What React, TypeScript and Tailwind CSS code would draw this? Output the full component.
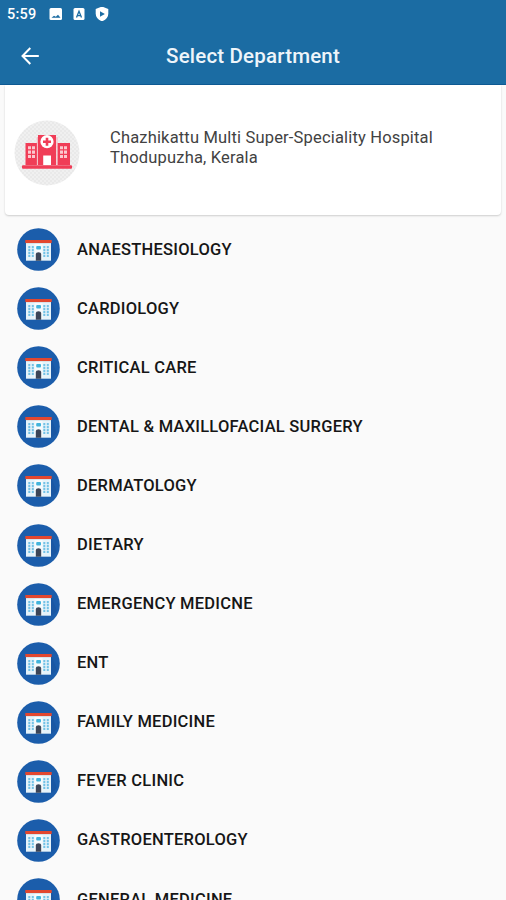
const departments = [
  "ANAESTHESIOLOGY",
  "CARDIOLOGY",
  "CRITICAL CARE",
  "DENTAL & MAXILLOFACIAL SURGERY",
  "DERMATOLOGY",
  "DIETARY",
  "EMERGENCY MEDICNE",
  "ENT",
  "FAMILY MEDICINE",
  "FEVER CLINIC",
  "GASTROENTEROLOGY",
  "GENERAL MEDICINE",
];

function StatusBar() {
  return (
    <div className="flex h-7 items-center pl-[7px] text-white">
      <span className="w-[42px] pt-0.5 text-[14.5px] leading-none font-medium tracking-[0.2px]">
        5:59
      </span>
      <svg className="h-3.5 w-[62px]" viewBox="0 0 62 14">
        <rect x="0.5" y="1" width="12.5" height="12" rx="1.5" fill="#fff" />
        <path d="M2.5 10.8 L5 8.8 L6.8 9.8 L9 7.8 L11.5 10.8 Z" fill="#1b6ca3" />
        <rect x="24.5" y="1" width="11" height="12" rx="1.5" fill="#fff" />
        <path
          d="M27.5 10.5 L30 4.2 L32.5 10.5 M28.4 8.6 H31.6"
          fill="none"
          stroke="#1b6ca3"
          strokeWidth="1.3"
        />
        <path
          d="M53 -0.5 L59.3 2 V6.5 C59.3 10.2 56.8 13 53 14.3 C49.2 13 46.7 10.2 46.7 6.5 V2 Z"
          fill="#fff"
        />
        <path d="M51 4.2 L55.9 7 L51 9.8 Z" fill="#1b6ca3" />
      </svg>
    </div>
  );
}

function Header() {
  return (
    <header className="h-[85px] shrink-0 border-b border-[#0e5a94] bg-[#1b6ca3]">
      <StatusBar />
      <div className="grid h-14 grid-cols-[60px_1fr_60px] items-center text-white">
        <button className="flex pl-5" aria-label="Back">
          <svg
            className="size-5"
            viewBox="0 0 20 20"
            fill="none"
            stroke="currentColor"
            strokeWidth="2"
          >
            <path d="M18.8 10 H3 M10.3 2 L2.5 10 L10.3 18" />
          </svg>
        </button>
        <h1 className="text-center text-[20.5px] leading-none font-medium tracking-[0.18px] text-[#eef5fa]">
          Select Department
        </h1>
      </div>
    </header>
  );
}

function HospitalLogo() {
  return (
    <svg className="size-[66px] shrink-0" viewBox="0 0 66 66">
      <defs>
        <pattern id="checks" width="4" height="4" patternUnits="userSpaceOnUse">
          <rect width="4" height="4" fill="#f0f0f0" />
          <path d="M0 0 H2 V2 H0 Z M2 2 H4 V4 H2 Z" fill="#e9e9e9" />
        </pattern>
      </defs>
      <circle cx="33" cy="33" r="32.5" fill="url(#checks)" />
      <g fill="#f03d57">
        <path d="M24 15 H42 V45 H24 Z" />
        <path d="M11.5 23 H23 V45 H11.5 Z" />
        <path d="M43.5 23 H56 V45 H43.5 Z" />
        <rect x="8" y="45.3" width="50" height="3.5" rx="1" />
      </g>
      <path d="M23.3 17 V45 M43 17 V45" stroke="#f7a3ae" strokeWidth="0.8" />
      <circle cx="33" cy="21.7" r="6.6" fill="#fff" />
      <path d="M33 17.7 V25.7 M29 21.7 H37" stroke="#f03d57" strokeWidth="2.6" />
      <path d="M29.2 35.5 H37 V45 H29.2 Z" fill="#fff" />
      <path
        d="M14 26.3 H17 V29.3 H14 Z M18 26.3 H21 V29.3 H18 Z M14 30.6 H17 V33.8 H14 Z M18 30.6 H21 V33.8 H18 Z M14 35 H17 V38 H14 Z M18 35 H21 V38 H18 Z M46 26.3 H49 V29.3 H46 Z M50 26.3 H53 V29.3 H50 Z M46 30.6 H49 V33.8 H46 Z M50 30.6 H53 V33.8 H50 Z M46 35 H49 V38 H46 Z M50 35 H53 V38 H50 Z"
        fill="#fbc9cf"
      />
    </svg>
  );
}

function DepartmentIcon() {
  return (
    <svg className="size-[43px] shrink-0" viewBox="0 0 43 43">
      <circle cx="21.5" cy="21.5" r="21.3" fill="#1b5dab" />
      <path d="M25 32.5 L35 32.5 L40 28 L34.5 14 Z" fill="#1957a3" />
      <path d="M9 14 H34 V32.7 H9 Z" fill="#e6f3fa" />
      <path d="M17.5 15 H25.5 V32 H17.5 Z" fill="#f7fafc" />
      <path d="M8.3 12 H34.7 V15 H8.3 Z" fill="#e2472f" />
      <path d="M9 15 H34 V15.8 H9 Z" fill="#d3dfe7" />
      <path
        d="M12.3 18 V29 M15.8 18 V29 M27.3 18 V29 M30.8 18 V29"
        stroke="#74c2e6"
        strokeWidth="2"
        strokeDasharray="2.2 0.8"
      />
      <rect x="19.2" y="18" width="4.8" height="3.6" rx="1" fill="#43b4dc" />
      <path d="M18.8 32.7 V26 Q18.8 24.3 21.5 24.3 Q24.2 24.3 24.2 26 V32.7 Z" fill="#3c4557" />
    </svg>
  );
}

export default function App() {
  return (
    <div className="flex h-[900px] w-[506px] flex-col overflow-hidden bg-[#fafafa] font-['Roboto',sans-serif]">
      <Header />

      <section className="mx-[5px] flex h-[130px] shrink-0 items-center rounded-b-[4px] bg-white pl-[9px] shadow-[0_1px_2px_rgba(0,0,0,0.18)]">
        <div className="mt-[5px]">
          <HospitalLogo />
        </div>
        <p className="-mt-1 ml-[30px] text-[16.5px] leading-5 tracking-[0.17px] text-[#424242]">
          Chazhikattu Multi Super-Speciality Hospital
          <br />
          Thodupuzha, Kerala
        </p>
      </section>

      <ul className="mt-[5px]">
        {departments.map((name) => (
          <li key={name} className="flex h-[59.1px] items-center pl-[17px]">
            <DepartmentIcon />
            <span className="ml-[17px] text-[16.5px] leading-5 font-medium tracking-[0.24px] whitespace-nowrap text-[#161616]">
              {name}
            </span>
          </li>
        ))}
      </ul>
    </div>
  );
}
